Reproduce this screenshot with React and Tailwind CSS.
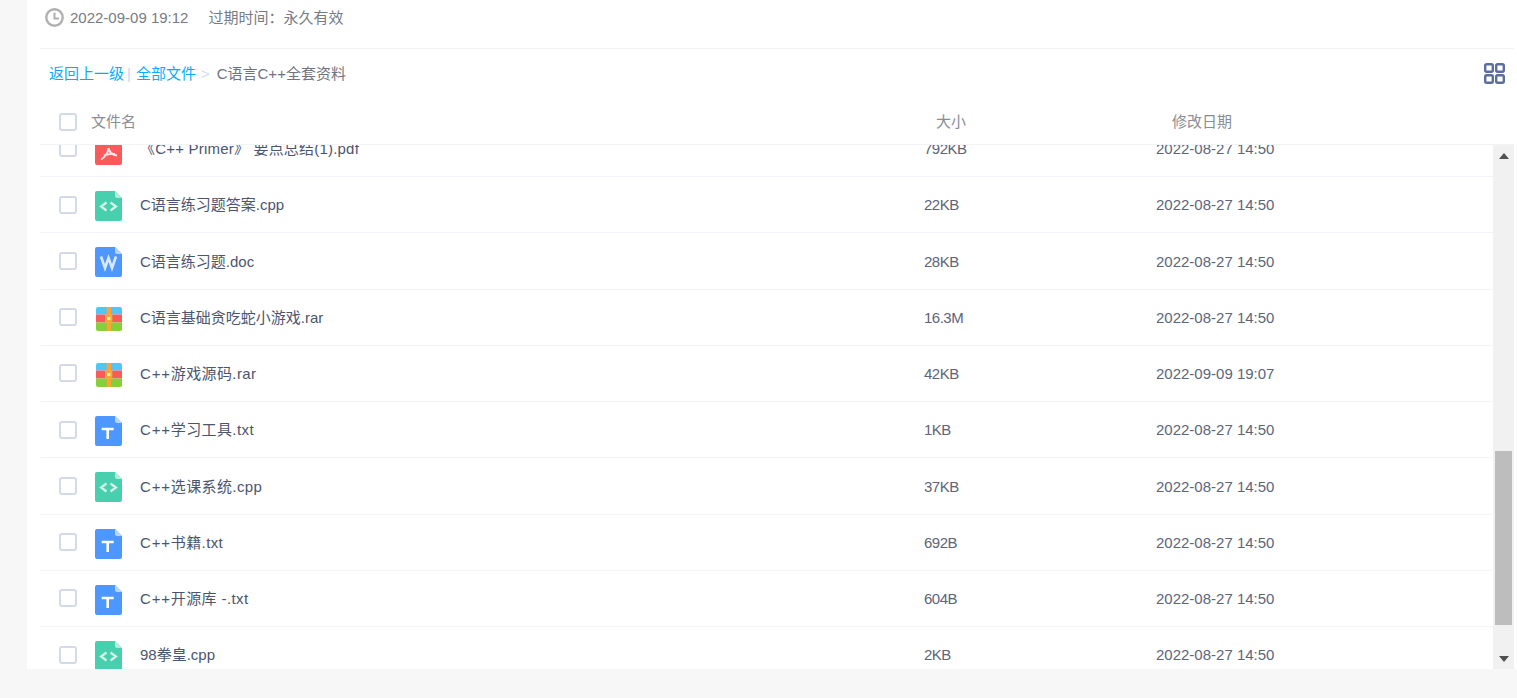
const rows = [
  ["pdf", "《C++ Primer》 要点总结(1).pdf", "792KB", "2022-08-27 14:50"],
  ["cpp", "C语言练习题答案.cpp", "22KB", "2022-08-27 14:50"],
  ["doc", "C语言练习题.doc", "28KB", "2022-08-27 14:50"],
  ["rar", "C语言基础贪吃蛇小游戏.rar", "16.3M", "2022-08-27 14:50"],
  ["rar", "C++游戏源码.rar", "42KB", "2022-09-09 19:07"],
  ["txt", "C++学习工具.txt", "1KB", "2022-08-27 14:50"],
  ["cpp", "C++选课系统.cpp", "37KB", "2022-08-27 14:50"],
  ["txt", "C++书籍.txt", "692B", "2022-08-27 14:50"],
  ["txt", "C++开源库 -.txt", "604B", "2022-08-27 14:50"],
  ["cpp", "98拳皇.cpp", "2KB", "2022-08-27 14:50"],
];

function Doc({ fill, fold, children }) {
  return (
    <svg width="27" height="30" viewBox="0 0 27 30" className="block">
      <path d="M2 0H20L27 7V28a2 2 0 0 1-2 2H2a2 2 0 0 1-2-2V2a2 2 0 0 1 2-2Z" fill={fill} />
      <path d="M20 0L27 7H22a2 2 0 0 1-2-2Z" fill={fold} />
      {children}
    </svg>
  );
}

function FileIcon({ type }) {
  if (type === "cpp")
    return (
      <Doc fill="#48cfad" fold="#b5ecd9">
        <path d="M11.5 11.5L6 15.5L11.5 19.5M15.5 11.5L21 15.5L15.5 19.5" fill="none" stroke="#d6f5ea" strokeWidth="2.2" />
      </Doc>
    );
  if (type === "doc")
    return (
      <Doc fill="#4d97ff" fold="#b8d5ff">
        <path d="M6 9.5L10 21L13.5 11L17 21L21 9.5" fill="none" stroke="#dbe9ff" strokeWidth="2.6" />
      </Doc>
    );
  if (type === "txt")
    return (
      <Doc fill="#4d97ff" fold="#b8d5ff">
        <path d="M6.7 13H18.7M12.7 13V23" fill="none" stroke="#ffffff" strokeWidth="2.6" />
      </Doc>
    );
  if (type === "pdf")
    return (
      <Doc fill="#fc5a5a" fold="#fdc0c0">
        <path d="M13.5 13C13 18 10 22 6 24.5M13.5 13C14.5 18 17 20 22 20.5M9 20.5C13 19 17 18.5 20 19" fill="none" stroke="#fde0e0" strokeWidth="2" />
      </Doc>
    );
  return (
    <svg width="27" height="24" viewBox="0 0 27 24" className="block">
      <path d="M3 0H25a2 2 0 0 1 2 2V7.5H1V2a2 2 0 0 1 2-2Z" fill="#4fc6fa" />
      <rect x="1" y="7.5" width="26" height="8" fill="#fc5a5a" />
      <path d="M1 15.5H27V22a2 2 0 0 1-2 2H3a2 2 0 0 1-2-2Z" fill="#82d03c" />
      <rect x="11.7" y="0" width="4.4" height="24" fill="#f6a833" />
      <rect x="10" y="8" width="7.4" height="6.8" fill="#f6a833" />
      <rect x="12" y="10" width="3.4" height="3" fill="#fde3b0" />
    </svg>
  );
}

function Name({ text }) {
  const m = text.match(/^(C\+\+)(.*)$/);
  if (m)
    return (
      <>
        <span className="tracking-[0.8px]">{m[1]}</span>
        <span className="tracking-[0.4px]">{m[2]}</span>
      </>
    );
  if (text.includes("C++")) return <span className="tracking-[0.2px]">{text}</span>;
  return text;
}

function Check() {
  return <span className="block w-[18px] h-[18px] shrink-0 border-2 border-[#d3d9e6] rounded-[3px] bg-white" />;
}

export default function App() {
  return (
    <div className="h-[698px] overflow-hidden bg-[#f7f7f7] pl-[27px] font-['Liberation_Sans','Noto_Sans_CJK_SC',sans-serif] text-[15px]">
      <div className="h-[669px] bg-white pl-[13px] pr-[3px] flex flex-col">
        <div className="h-[49px] shrink-0 border-b border-[#f2f3f6] flex items-start pt-[8px] pl-[5px] text-[#777b85]">
          <svg width="19" height="19" viewBox="0 0 19 19" className="block shrink-0">
            <circle cx="9.5" cy="9.5" r="8.2" fill="none" stroke="#b0b0b0" strokeWidth="2.4" />
            <path d="M9.5 4.5V10.5H14" fill="none" stroke="#b0b0b0" strokeWidth="2" />
          </svg>
          <span className="ml-[6px] leading-[19px]">2022-09-09 19:12</span>
          <span className="ml-[20px] leading-[19px]">过期时间：永久有效</span>
        </div>
        <div className="h-[49px] shrink-0 flex items-center pl-[9px] pr-[9px] justify-between">
          <div className="flex items-center pt-[2px]">
            <span className="text-[#09aaff]">返回上一级</span>
            <span className="text-[#c4d7ea] ml-[3px] mr-[5px]">|</span>
            <span className="text-[#09aaff]">全部文件</span>
            <span className="text-[#d3dbe8] ml-[5px] mr-[7px]">&gt;</span>
            <span className="text-[#6f7480]">C语言C++全套资料</span>
          </div>
          <svg width="21" height="21" viewBox="0 0 21 21" className="block">
            <rect x="1.2" y="1.2" width="7.6" height="7.6" rx="1.5" fill="none" stroke="#5a6d9e" strokeWidth="2.4" />
            <rect x="12.2" y="1.2" width="7.6" height="7.6" rx="1.5" fill="none" stroke="#5a6d9e" strokeWidth="2.4" />
            <rect x="1.2" y="12.2" width="7.6" height="7.6" rx="1.5" fill="none" stroke="#5a6d9e" strokeWidth="2.4" />
            <rect x="12.2" y="12.2" width="7.6" height="7.6" rx="1.5" fill="none" stroke="#5a6d9e" strokeWidth="2.4" />
          </svg>
        </div>
        <div className="h-[47px] shrink-0 border-b border-[#f2f3f6] flex items-center pl-[19px] text-[#8a8d94] pt-[1px]">
          <Check />
          <span className="ml-[14px] w-[845px] pt-[2px]">文件名</span>
          <span className="w-[236px] pt-[2px]">大小</span>
          <span className="pt-[2px]">修改日期</span>
        </div>
        <div className="flex-1 min-h-0 flex">
          <div className="flex-1 min-w-0 overflow-hidden">
            <div className="-mt-[24.25px]">
              {rows.map((r, i) => (
                <div key={i} className="h-[56.25px] border-b border-[#f1f5fb] flex items-center pl-[19px]">
                  <Check />
                  <span className="ml-[18px] w-[27px] shrink-0 flex justify-center pt-[3px]">
                    <FileIcon type={r[0]} />
                  </span>
                  <span className="ml-[18px] w-[784px] pt-[2px] text-[#4b556f]"><Name text={r[1]} /></span>
                  <span className="w-[232px] pt-[2px] text-[#5c6579] tracking-[-0.5px]">{r[2]}</span>
                  <span className="pt-[2px] text-[#5c6579]">{r[3]}</span>
                </div>
              ))}
            </div>
          </div>
          <div className="w-[21px] shrink-0 bg-[#f1f1f1] flex flex-col items-center">
            <svg width="10" height="6" viewBox="0 0 10 6" className="block mt-[8px]">
              <path d="M5 0L10 6H0Z" fill="#505050" />
            </svg>
            <div className="w-[17px] h-[174px] mt-[292px] bg-[#bdbdbd]" />
            <svg width="10" height="6" viewBox="0 0 10 6" className="block mt-[31px]">
              <path d="M0 0H10L5 6Z" fill="#505050" />
            </svg>
          </div>
        </div>
      </div>
    </div>
  );
}
